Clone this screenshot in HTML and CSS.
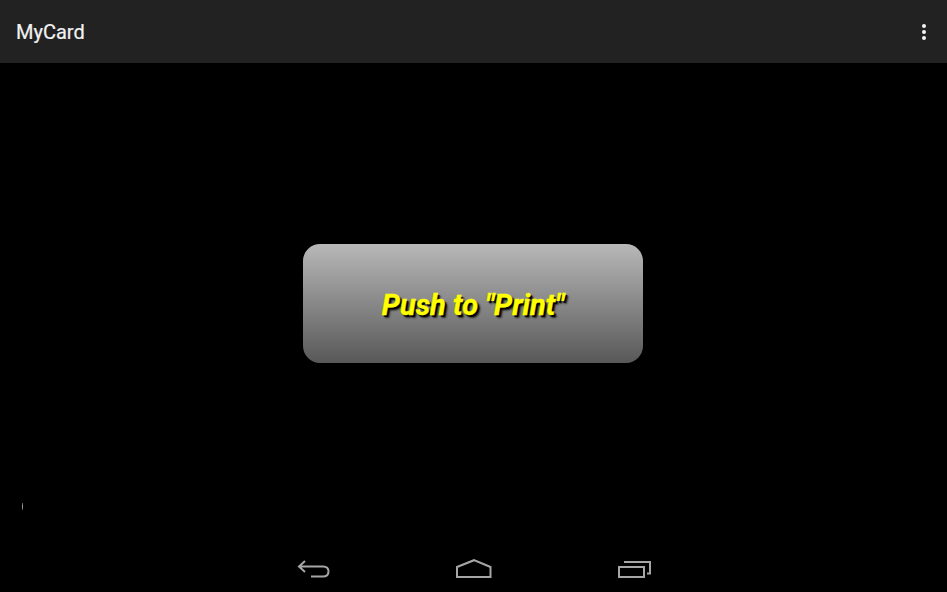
FILE: index.html
```html
<!DOCTYPE html>
<html lang="en">
<head>
<meta charset="utf-8">
<title>MyCard</title>
<link rel="stylesheet" href="styles.css">
</head>
<body>
<div class="screen">
  <header class="action-bar">
    <h1 class="title">MyCard</h1>
    <div class="overflow" aria-label="More options"><span class="dot"></span><span class="dot"></span><span class="dot"></span></div>
  </header>
  <main class="content">
    <span class="speck"></span>
    <button class="print-button" type="button">Push to "Print"</button>
  </main>
  <nav class="nav-bar">
    <svg class="nav-icon" width="34" height="20" viewBox="0 0 34 20" aria-label="Back"><path d="M9 2 L3 7.500 L9 13 M3 7.500 H27 Q32.500 7.500 32.500 12.500 Q32.500 17.500 27 17.500 H15" fill="none" stroke="#a6a6a6" stroke-width="2"/></svg>
    <svg class="nav-icon" width="36" height="20" viewBox="0 0 36 20" aria-label="Home"><path d="M1 8 L18 1.200 L34.500 8 V18 H1 Z" fill="none" stroke="#a6a6a6" stroke-width="2"/></svg>
    <svg class="nav-icon" width="34" height="20" viewBox="0 0 34 20" aria-label="Recent apps"><path d="M1 8 H26 V18 H1 Z M6 3 H32 V14.500 H29" fill="none" stroke="#a6a6a6" stroke-width="2"/></svg>
  </nav>
</div>
</body>
</html>
```
FILE: styles.css
```css
* { box-sizing: border-box; }
html, body { margin: 0; height: 100%; background: #000; }
.screen {
  position: relative;
  display: flex;
  flex-direction: column;
  width: 947px;
  height: 592px;
  overflow: hidden;
  background: #000;
  font-family: Roboto, "Liberation Sans", sans-serif;
}
.action-bar {
  display: flex;
  align-items: center;
  justify-content: space-between;
  height: 63px;
  padding: 0 21px 0 16px;
  background: #222;
  flex: none;
}
.title {
  margin: 0;
  color: #f2f2f2;
  font-size: 20px;
  font-weight: 400;
  -webkit-text-stroke: 0.2px #f2f2f2;
}
.overflow {
  display: flex;
  flex-direction: column;
  gap: 2px;
}
.dot {
  width: 4px;
  height: 4px;
  border-radius: 50%;
  background: #f4f4f4;
}
.content {
  flex: 1;
  display: flex;
  align-items: center;
  justify-content: center;
  padding-right: 1px;
}
.speck {
  position: absolute;
  left: 22px;
  top: 503px;
  width: 1px;
  height: 7px;
  background: linear-gradient(#555, #aaa 50%, #444);
}
.print-button {
  width: 340px;
  height: 119px;
  padding: 3px 0 0;
  border: 0;
  border-radius: 17px;
  background: linear-gradient(#b8b8b8, #585858);
  color: #ffff00;
  font-family: Roboto, "Liberation Sans", sans-serif;
  font-size: 29px;
  font-style: italic;
  font-weight: 700;
  -webkit-text-stroke: 0.4px #ffff00;
  text-shadow: 2px 2px 1px #000, 3px 3px 2px rgba(0, 0, 0, 0.6);
}
.nav-bar {
  display: flex;
  align-items: flex-start;
  justify-content: center;
  gap: 126px;
  height: 48px;
  padding-top: 15px;
  flex: none;
}
```
